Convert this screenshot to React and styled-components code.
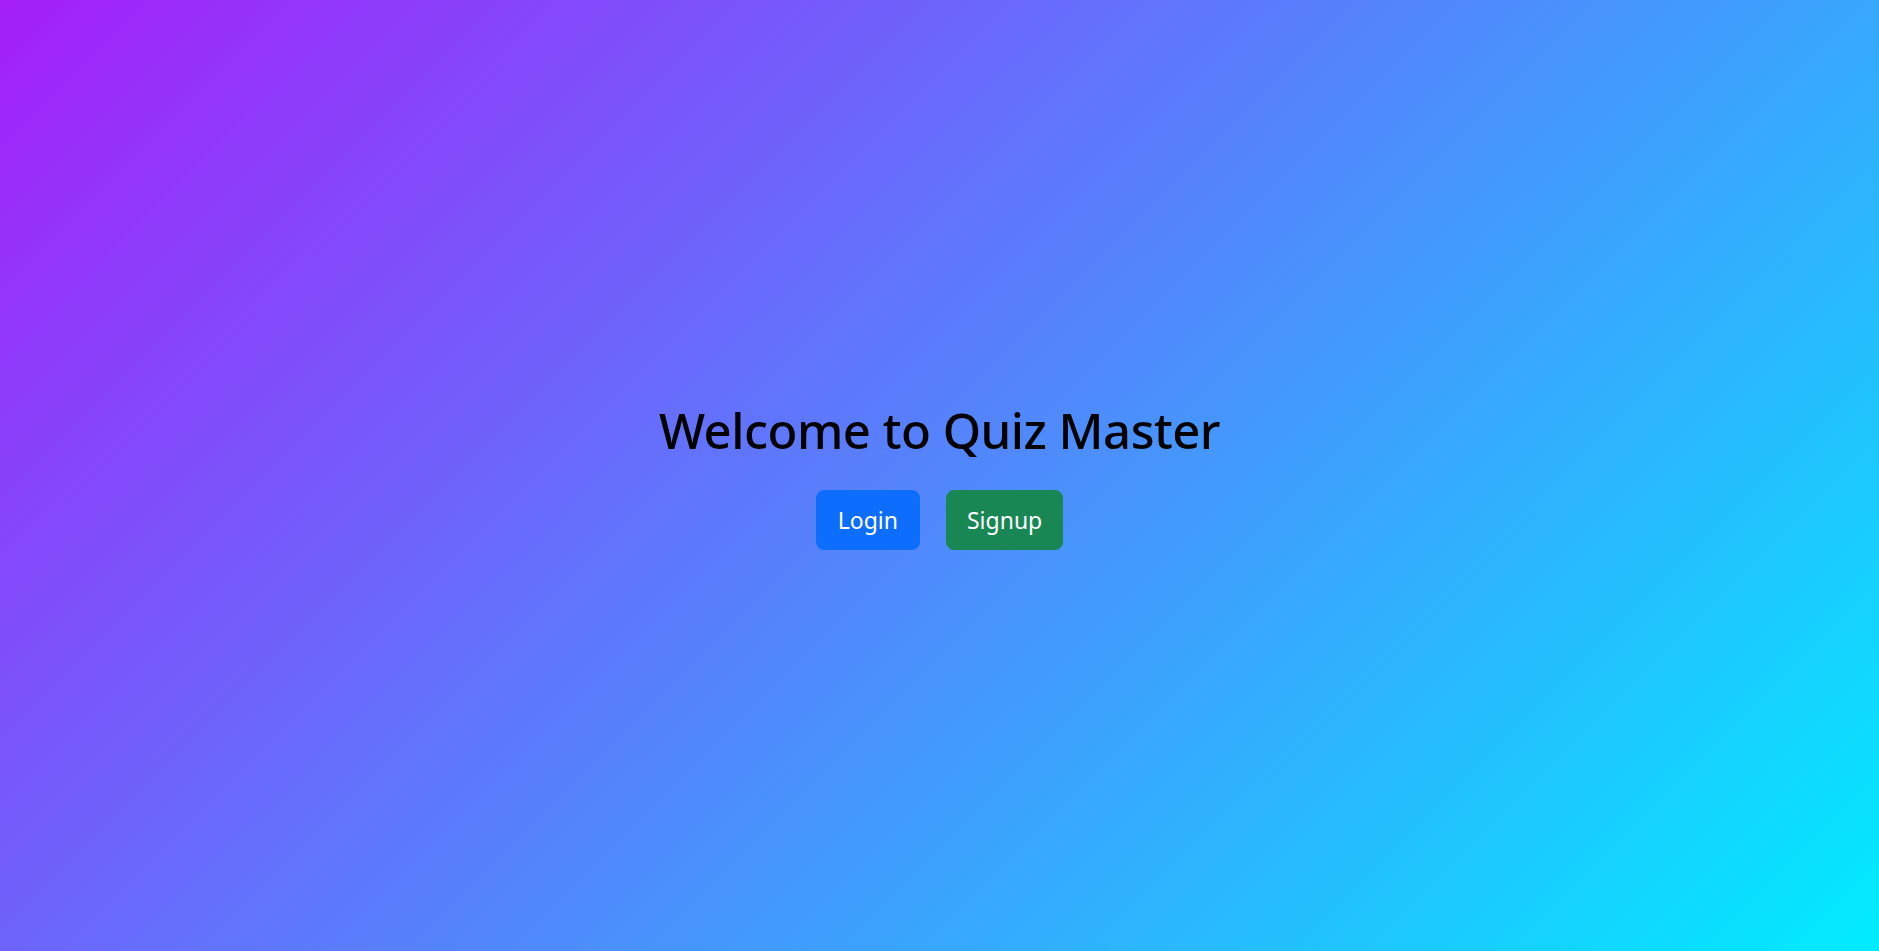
import React from 'react'
import styled, { createGlobalStyle } from 'styled-components'

const GlobalStyle = createGlobalStyle`
  * { box-sizing: border-box; }
  html, body { margin: 0; padding: 0; }
  body {
    font-family: "Noto Sans", "Open Sans", sans-serif;
    color: #000;
  }
`

const Page = styled.div`
  min-height: 100vh;
  display: flex;
  flex-direction: column;
  align-items: center;
  justify-content: center;
  background: linear-gradient(135deg, #a51ff9, #00ecff);
`

const Title = styled.h1`
  margin: 0 0 30px;
  font-size: 49px;
  font-weight: 500;
  line-height: 1.2;
  letter-spacing: -0.5px;
`

const Actions = styled.div`
  display: flex;
  gap: 26px;
`

const Button = styled.button`
  font-family: inherit;
  font-size: 23px;
  line-height: 1.5;
  padding: 11px ${p => p.$pad}px;
  height: 60px;
  border: 1px solid ${p => p.$color};
  border-radius: 8px;
  background: ${p => p.$color};
  color: #fff;
  cursor: pointer;
`

export default function App() {
  return (
    <>
      <GlobalStyle />
      <Page>
        <Title>Welcome to Quiz Master</Title>
        <Actions>
          <Button $color="#0d6efd" $pad={21}>Login</Button>
          <Button $color="#198754" $pad={20}>Signup</Button>
        </Actions>
      </Page>
    </>
  )
}
